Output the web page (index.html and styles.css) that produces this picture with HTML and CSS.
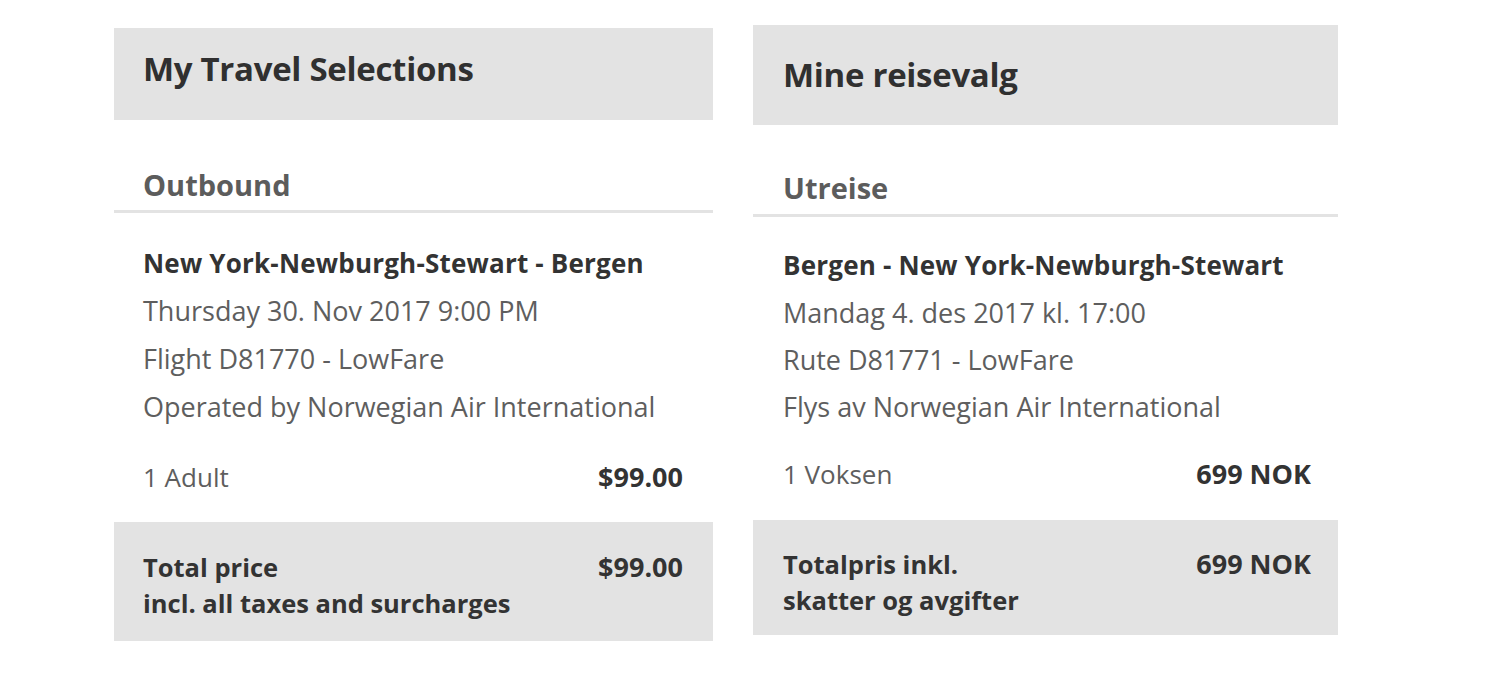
FILE: index.html
```html
<!DOCTYPE html>
<html lang="en">
<head>
<meta charset="utf-8">
<title>Travel Selections</title>
<link rel="stylesheet" href="styles.css">
</head>
<body>
<div class="page">
  <section class="panel panel--en">
    <header class="panel__head"><h1 class="panel__title">My Travel Selections</h1></header>
    <h2 class="panel__sub">Outbound</h2>
    <div class="panel__body">
      <p class="route">New York-Newburgh-Stewart - Bergen</p>
      <p class="info">Thursday 30. Nov 2017 9:00 PM</p>
      <p class="info">Flight D81770 - LowFare</p>
      <p class="info">Operated by Norwegian Air International</p>
      <div class="fare"><span class="fare__pax">1 Adult</span><strong class="fare__price">$99.00</strong></div>
    </div>
    <div class="total">
      <div class="total__label">Total price<br>incl. all taxes and surcharges</div>
      <div class="total__amount">$99.00</div>
    </div>
  </section>
  <section class="panel panel--no" lang="no">
    <header class="panel__head"><h1 class="panel__title">Mine reisevalg</h1></header>
    <h2 class="panel__sub">Utreise</h2>
    <div class="panel__body">
      <p class="route">Bergen - New York-Newburgh-Stewart</p>
      <p class="info">Mandag 4. des 2017 kl. 17:00</p>
      <p class="info">Rute D81771 - LowFare</p>
      <p class="info">Flys av Norwegian Air International</p>
      <div class="fare"><span class="fare__pax">1 Voksen</span><strong class="fare__price">699 NOK</strong></div>
    </div>
    <div class="total">
      <div class="total__label">Totalpris inkl.<br>skatter og avgifter</div>
      <div class="total__amount">699 NOK</div>
    </div>
  </section>
</div>
</body>
</html>
```
FILE: styles.css
```css
* { box-sizing: border-box; }
html, body { margin: 0; padding: 0; background: #fff; }
body { font-family: "Open Sans", Roboto, "Liberation Sans", sans-serif; color: #333; }

.page {
  display: flex;
  align-items: flex-start;
  gap: 40px;
  padding: 25px 0 0 114px;
}

.panel { display: flex; flex-direction: column; }
.panel--en { width: 599px; margin-top: 3px; }
.panel--no { width: 585px; }

.panel__head {
  background: #e3e3e3;
  padding: 23px 29px 33px;
}
.panel--no .panel__head { padding: 32px 30px 32px; }

.panel__title {
  margin: 0;
  font-size: 33px;
  line-height: 36px;
  font-weight: 700;
  color: #303030;
  letter-spacing: -0.3px;
}

.panel__sub {
  margin: 50px 0 0;
  padding: 0 29px 10px;
  font-size: 29px;
  line-height: 30px;
  font-weight: 700;
  color: #5c5c5c;
  border-bottom: 3px solid #e3e3e3;
}
.panel--no .panel__sub { margin-top: 48px; padding: 0 30px 11px; }

.panel__body { padding: 26px 30px 0 29px; }
.panel--no .panel__body { padding: 25px 27px 0 30px; }

.route, .info {
  margin: 0;
  line-height: 48px;
}
.panel--no .route, .panel--no .info { line-height: 47px; }
.route { font-size: 26px; font-weight: 700; color: #333; letter-spacing: 0.2px; }
.info { font-size: 27px; color: #5e5e5e; }

.fare {
  display: flex;
  justify-content: space-between;
  align-items: baseline;
  margin-top: 22px;
  font-size: 26px;
  line-height: 48px;
}
.panel--no .fare { margin-top: 20px; line-height: 47px; }
.fare__pax { color: #5e5e5e; }
.fare__price { font-weight: 700; font-size: 27px; color: #333; }

.total {
  display: flex;
  justify-content: space-between;
  align-items: flex-start;
  margin-top: 21px;
  background: #e3e3e3;
  padding: 27px 30px 20px 29px;
  font-size: 25.5px;
  line-height: 36px;
  font-weight: 700;
  color: #333;
}
.panel--no .total { margin-top: 22px; padding: 26px 27px 17px 30px; }
.total__amount { font-size: 27px; }
```
